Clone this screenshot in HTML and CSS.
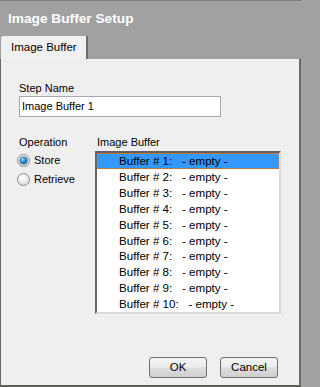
FILE: index.html
```html
<!DOCTYPE html>
<html>
<head>
<meta charset="utf-8">
<link rel="stylesheet" href="styles.css">
</head>
<body>
<div class="window">
  <div class="titlebar">Image Buffer Setup</div>
  <div class="tabs"><div class="tab">Image Buffer</div></div>
  <div class="panel">
    <div class="label">Step Name</div>
    <div class="input">Image Buffer 1</div>
    <div class="columns">
      <div class="col-op">
        <div class="label">Operation</div>
        <div class="radio-row"><span class="radio checked"></span><span>Store</span></div>
        <div class="radio-row"><span class="radio"></span><span>Retrieve</span></div>
      </div>
      <div class="col-list">
        <div class="label list-label">Image Buffer</div>
        <div class="listbox">
          <div class="row selected">Buffer # 1:   - empty -</div>
          <div class="row">Buffer # 2:   - empty -</div>
          <div class="row">Buffer # 3:   - empty -</div>
          <div class="row">Buffer # 4:   - empty -</div>
          <div class="row">Buffer # 5:   - empty -</div>
          <div class="row">Buffer # 6:   - empty -</div>
          <div class="row">Buffer # 7:   - empty -</div>
          <div class="row">Buffer # 8:   - empty -</div>
          <div class="row">Buffer # 9:   - empty -</div>
          <div class="row">Buffer # 10:   - empty -</div>
        </div>
      </div>
    </div>
    <div class="buttons">
      <div class="btn">OK</div>
      <div class="btn">Cancel</div>
    </div>
  </div>
</div>
</body>
</html>
```
FILE: styles.css
```css
html, body {
  margin: 0;
  padding: 0;
  background: #a1a1a1;
}
body {
  font-family: "Liberation Sans", Arial, sans-serif;
  font-size: 11px;
  color: #000;
}
.window {
  width: 301px;
  height: 387px;
  box-sizing: border-box;
  border-top: 1px solid #7c7c7c;
  background: #a1a1a1;
  display: flex;
  flex-direction: column;
}
.titlebar {
  height: 35px;
  line-height: 35px;
  padding-left: 8px;
  color: #fff;
  font-weight: bold;
  font-size: 13.7px;
}
.tabs {
  height: 23px;
  display: flex;
  align-items: flex-end;
  padding-left: 1px;
}
.tab {
  width: 75px;
  height: 23px;
  padding-left: 10px;
  line-height: 22px;
  background: #f0f0f0;
  border-right: 2px solid #6e6e6e;
  border-top-left-radius: 2px;
  font-size: 11.5px;
}
.panel {
  flex: 1;
  background: #efefef;
  border-left: 1px solid #696969;
  border-right: 2px solid #6a6a6a;
  border-bottom: 2px solid #5c5e5a;
  padding: 23px 0 7px 18px;
  display: flex;
  flex-direction: column;
}
.label {
  line-height: 13px;
  height: 13px;
}
.input {
  margin-top: 1px;
  width: 198px;
  height: 19px;
  border: 1px solid #a9a8ae;
  background: #fff;
  padding-left: 2px;
  line-height: 19px;
  box-sizing: content-box;
}
.columns {
  margin-top: 19px;
  display: flex;
}
.col-op {
  width: 76px;
}
.radio-row {
  display: flex;
  align-items: center;
  height: 18px;
  margin-top: 2px;
  margin-left: -2px;
}
.radio-row + .radio-row {
  margin-top: 1px;
}
.radio {
  width: 11px;
  height: 11px;
  border-radius: 50%;
  border: 1px solid #8c8e8e;
  background: radial-gradient(circle at 40% 35%, #ffffff 0%, #f0f0f0 40%, #cfcfcf 100%);
  margin-right: 4px;
  position: relative;
  flex: none;
}
.radio.checked::after {
  content: "";
  position: absolute;
  left: 2px;
  top: 2px;
  width: 7px;
  height: 7px;
  border-radius: 50%;
  background: radial-gradient(circle at 40% 35%, #9fe0ff 0%, #2b8fd8 40%, #0b4f8a 100%);
  box-shadow: 0 0 0 0.5px #1c3e5c;
}
.col-list {
  display: flex;
  flex-direction: column;
}
.list-label {
  padding-left: 2px;
}
.listbox {
  margin-top: 2px;
  width: 182px;
  height: 159px;
  background: #fff;
  border-top: 2px solid #5f5f5f;
  border-left: 2px solid #666;
  border-right: 2px solid #d9d9d9;
  border-bottom: 2px solid #d9d9d9;
  overflow: hidden;
  padding-top: 0;
}
.row {
  height: 15.9px;
  line-height: 15.9px;
  padding-left: 22px;
  white-space: pre;
  font-size: 11.6px;
  box-sizing: border-box;
}
.row.selected {
  background: #3399ff;
  height: 16px;
  border: 1px dotted #c87a3c;
  padding-left: 21px;
  line-height: 14px;
}
.buttons {
  margin-top: auto;
  display: flex;
  justify-content: flex-end;
  gap: 13px;
  padding-right: 21px;
}
.btn {
  width: 56px;
  height: 19px;
  border: 1px solid #707070;
  border-radius: 3px;
  background: linear-gradient(#f3f3f3 0%, #ebebeb 48%, #dddddd 52%, #cfcfcf 100%);
  text-align: center;
  line-height: 19px;
  font-size: 11.5px;
}
```
